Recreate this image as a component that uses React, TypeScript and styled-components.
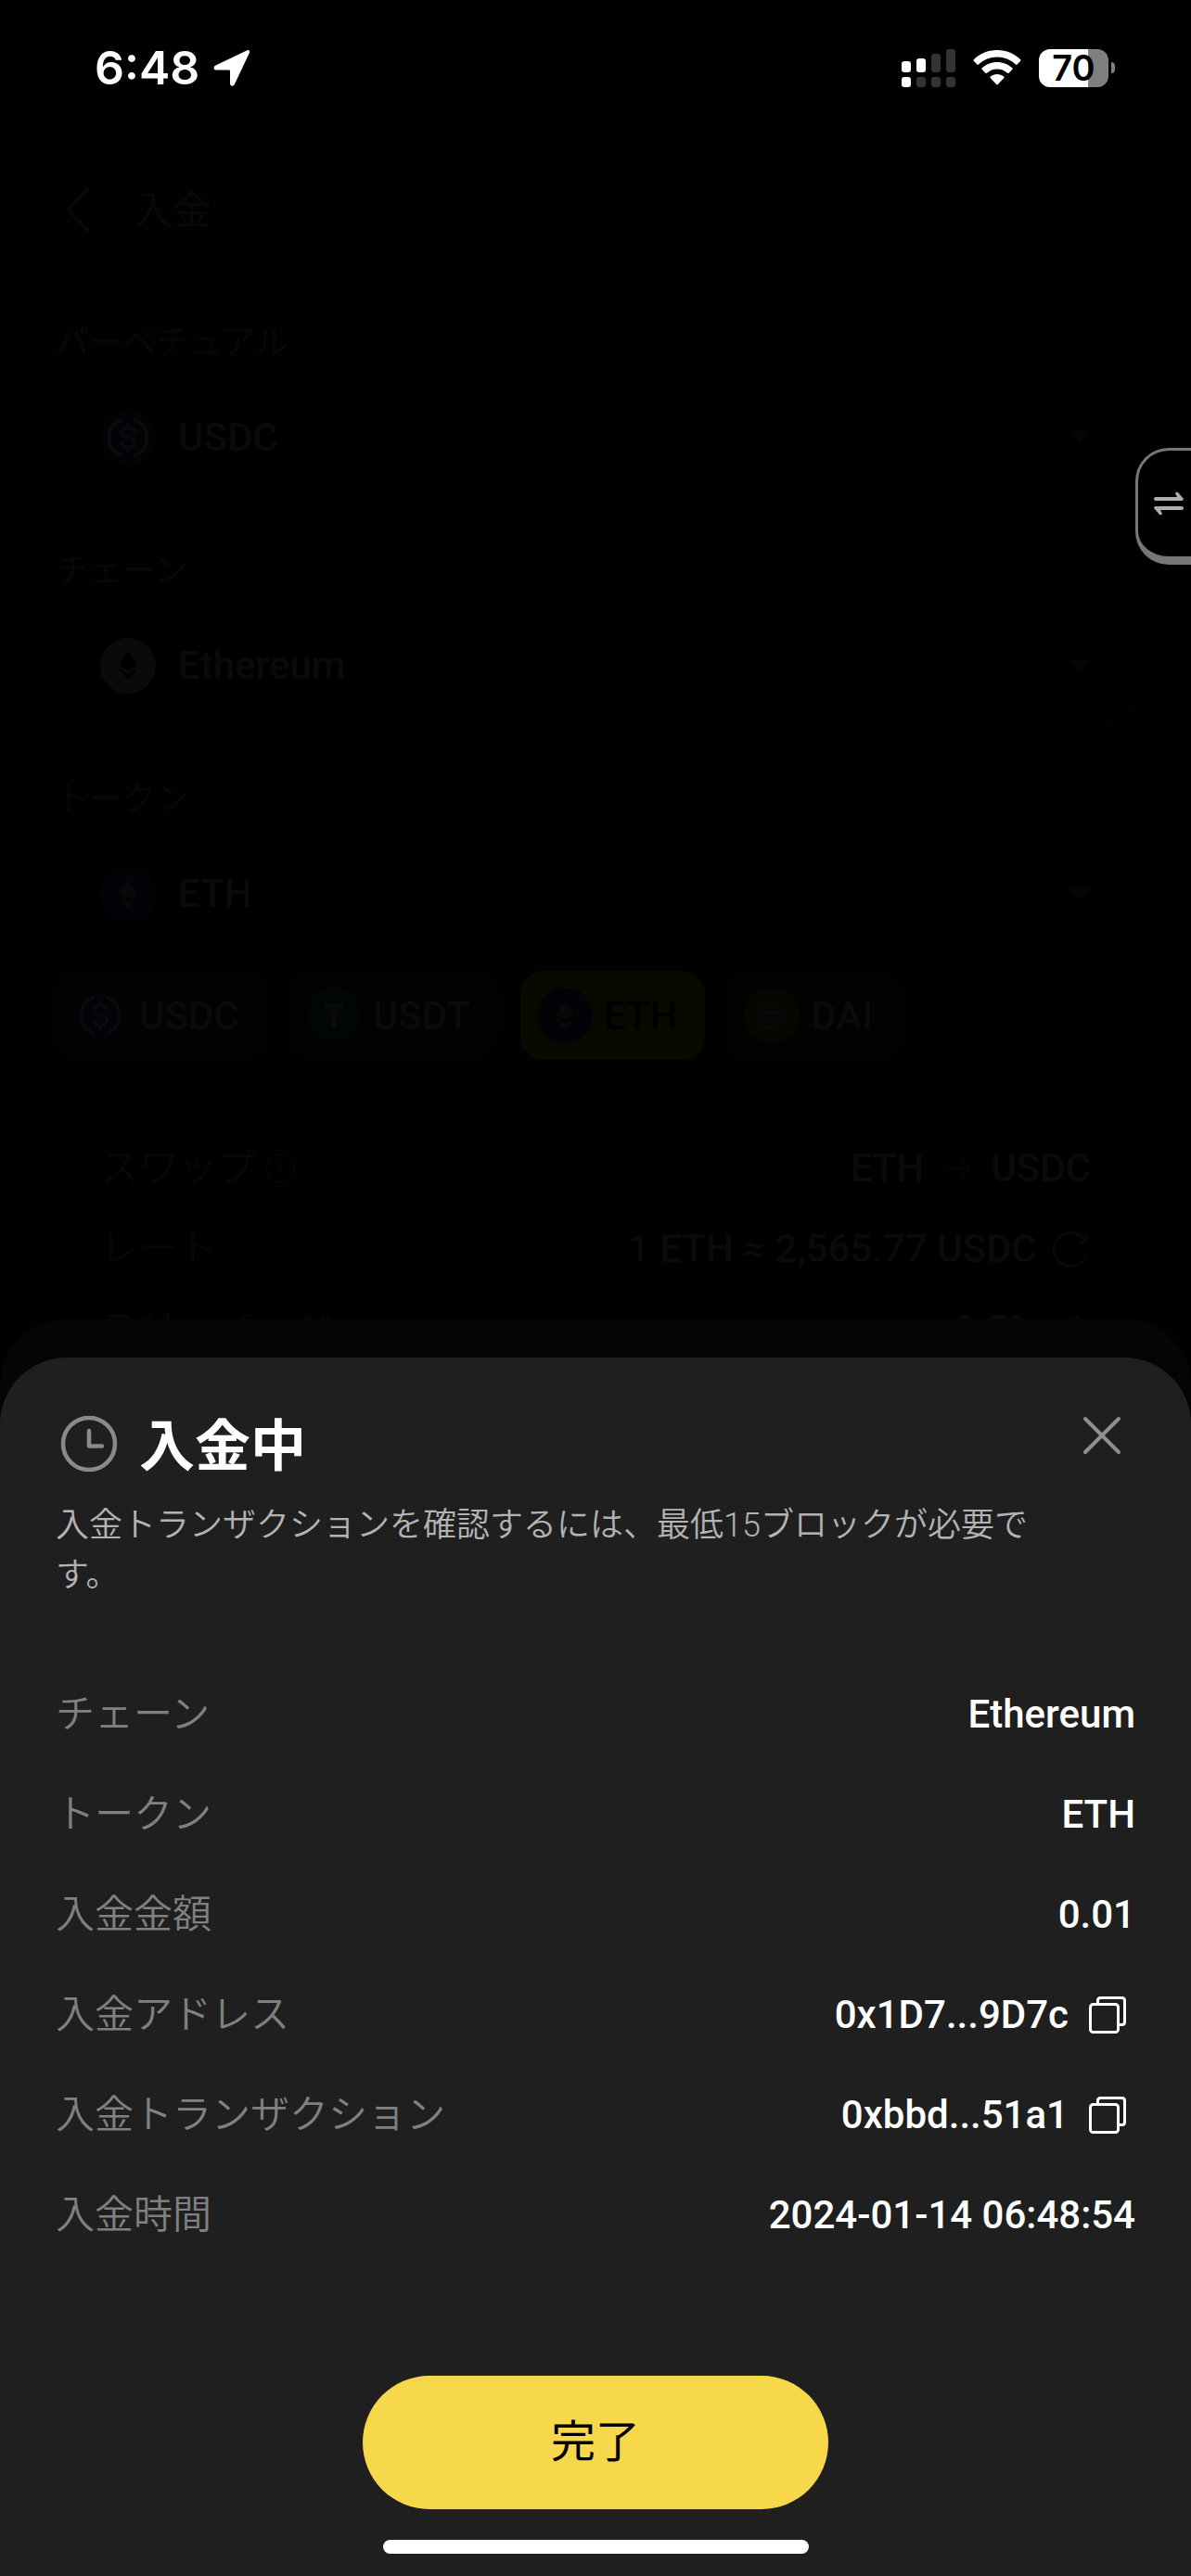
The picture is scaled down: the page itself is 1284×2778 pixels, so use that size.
import React, { useId } from "react";
import styled, { createGlobalStyle } from "styled-components";

const GlobalStyle = createGlobalStyle`
  *, *::before, *::after { box-sizing: border-box; }
  html, body { margin: 0; background: #010101; }
  body {
    font-family: Roboto, "Noto Sans CJK JP", sans-serif;
    font-size: 42px;
    color: #fff;
  }
  button, select { font: inherit; color: inherit; }
  button { border: 0; background: none; padding: 0; cursor: pointer; }
  svg { display: block; flex: none; }
  h1, h2, p, dl, dd, dt { margin: 0; padding: 0; font-weight: 400; }
`;

const Screen = styled.div`
  position: relative;
  display: flex;
  flex-direction: column;
  height: 100vh;
  overflow: hidden;
`;

const StatusBar = styled.header`
  display: flex;
  align-items: center;
  justify-content: space-between;
  height: 146px;
  padding: 0 82px 0 102px;
  flex: none;
`;

const StatusGroup = styled.div<{ $gap: number }>`
  display: flex;
  align-items: center;
  gap: ${(p) => p.$gap}px;
`;

const Clock = styled.time`
  font: 600 50px/60px Inter, sans-serif;
`;

const Battery = styled.div`
  display: flex;
  align-items: center;
  gap: 3px;
`;

const BatteryBody = styled.div`
  width: 75px;
  height: 41px;
  border-radius: 12px;
  background: linear-gradient(to right, #fff 53px, #808080 53px);
  color: #000;
  font: 600 38px/41px Inter, sans-serif;
  text-align: center;
`;

const BatteryTip = styled.div`
  width: 4px;
  height: 12px;
  border-radius: 0 4px 4px 0;
  background: #808080;
`;

const Main = styled.main`
  display: flex;
  flex-direction: column;
  padding: 0 60px;
  color: #0a0a0a;
`;

const NavBar = styled.nav`
  display: flex;
  align-items: center;
  height: 160px;
  gap: 36px;
`;

const BackButton = styled.button`
  width: 48px;
  height: 60px;
`;

const PageTitle = styled.h1`
  font-size: 42px;
  line-height: 60px;
  padding-top: 3px;
  color: #080808;
`;

const Field = styled.div`
  display: flex;
  flex-direction: column;
  gap: 15px;
  margin: 37px 0 20px;
`;

const FieldLabel = styled.label`
  color: #070707;
  font-size: 36px;
  line-height: 54px;
`;

const SelectBox = styled.div`
  display: flex;
  align-items: center;
  gap: 24px;
  height: 120px;
  padding: 0 48px;
  border-radius: 36px;
  background: #000;
`;

const Select = styled.select`
  flex: 1;
  appearance: none;
  border: 0;
  padding: 0;
  background: none;
  font-weight: 500;
  line-height: 60px;
`;

const Chips = styled.div`
  display: flex;
  gap: 24px;
  margin: 3px 0 36px;
`;

const Chip = styled.button<{ $active?: boolean }>`
  display: flex;
  align-items: center;
  gap: 12px;
  height: 96px;
  padding: 0 30px 0 18px;
  border-radius: 24px;
  background: ${(p) => (p.$active ? "#0a0900" : "#020202")};
  color: ${(p) => (p.$active ? "#000" : "#0a0a0a")};
  font-weight: 500;
`;

const Quote = styled.dl`
  display: flex;
  flex-direction: column;
  gap: 27px;
  padding: 51px 48px;
  border-radius: 36px;
  background: #000;
`;

const QuoteRow = styled.div`
  display: flex;
  align-items: center;
  justify-content: space-between;
  line-height: 60px;
`;

const QuoteName = styled.dt`
  display: flex;
  align-items: center;
  gap: 9px;
  color: #070707;
  font-weight: 350;
`;

const QuoteValue = styled.dd`
  display: flex;
  align-items: center;
  gap: 16px;
  font-weight: 500;
`;

const FloatingSwitch = styled.button`
  position: absolute;
  top: 483px;
  right: 0;
  display: flex;
  align-items: center;
  justify-content: flex-end;
  width: 60px;
  height: 126px;
  padding: 0 8px 0 0;
  border: solid #767676;
  border-width: 3px 0 9px 3px;
  border-radius: 36px 0 0 36px;
  background: #000;
`;

const SheetStack = styled.div`
  position: absolute;
  left: 0;
  right: 0;
  bottom: 0;
  padding-top: 42px;
  border-radius: 72px 72px 0 0;
  background: #050505;
`;

const Sheet = styled.section`
  display: flex;
  flex-direction: column;
  padding: 48px 60px 24px;
  border-radius: 72px 72px 0 0;
  background: #1f1f1f;
`;

const SheetHeader = styled.div`
  display: flex;
  align-items: flex-start;
  justify-content: space-between;
`;

const SheetIntro = styled.div`
  flex: 1;
  display: flex;
  flex-direction: column;
  gap: 8px;
`;

const SheetTitle = styled.h2`
  display: flex;
  align-items: flex-start;
  gap: 18px;
  font-size: 60px;
  font-weight: 700;
  line-height: 98px;
`;

const Note = styled.p`
  color: #b3b3b3;
  font-size: 36px;
  font-weight: 350;
  line-height: 54px;
`;

const CloseButton = styled.button`
  width: 72px;
  height: 72px;
`;

const Details = styled.dl`
  display: flex;
  flex-direction: column;
  padding: 69px 0 119px;
`;

const DetailRow = styled.div`
  display: flex;
  align-items: center;
  justify-content: space-between;
  height: 108px;
  line-height: 60px;
`;

const DetailName = styled.dt`
  color: #808080;
  font-weight: 350;
`;

const DetailValue = styled.dd`
  display: flex;
  align-items: center;
  gap: 12px;
  font-weight: 500;
`;

const DoneButton = styled.button`
  align-self: center;
  width: 502px;
  height: 144px;
  border-radius: 72px;
  background: #f7d84a;
  color: #000;
  font-size: 48px;
  line-height: 60px;
`;

const HomeIndicator = styled.div`
  align-self: center;
  width: 459px;
  height: 15px;
  margin-top: 33px;
  border-radius: 8px;
  background: #fff;
`;

type Coin = "USDC" | "USDT" | "ETH" | "DAI" | "Ethereum";

const coinColor: Record<Coin, string> = {
  USDC: "#010307",
  USDT: "#010504",
  ETH: "#020306",
  DAI: "#070500",
  Ethereum: "#0a0a0a",
};

function CoinIcon({ coin }: { coin: Coin }) {
  const ink =
    coin === "Ethereum" ? "#000" : coin === "ETH" || coin === "DAI" ? "#080808" : "#0a0a0a";
  return (
    <svg width="60" height="60" viewBox="0 0 60 60" fill="none" aria-hidden="true">
      <circle cx="30" cy="30" r="30" fill={coinColor[coin]} />
      {coin === "USDC" && (
        <g stroke={ink} strokeWidth="3.6">
          <path d="M24 10a21 21 0 0 0 0 40M36 10a21 21 0 0 1 0 40" />
          <path d="M37 25c0-4-3-6-7-6s-7 2-7 5.500 3 4.800 7 5.500 7 2 7 5.500-3 5.500-7 5.500-7-2-7-6M30 14v5M30 41v5" />
        </g>
      )}
      {coin === "USDT" && (
        <g stroke={ink}>
          <path d="M19 20h22M30 20v23" strokeWidth="5" />
          <ellipse cx="30" cy="28" rx="13" ry="3" strokeWidth="1.500" />
        </g>
      )}
      {(coin === "ETH" || coin === "Ethereum") && (
        <path d="M30 14l10 16-10 5-10-5zM20 33l10 5 10-5-10 13z" fill={ink} />
      )}
      {coin === "DAI" && (
        <path d="M19 16.500h9c8.500 0 14 5.500 14 13.500s-5.500 13.500-14 13.500h-9zM13 26.500h34M13 33.500h34" stroke={ink} strokeWidth="3" />
      )}
    </svg>
  );
}

const CaretDown = () => (
  <svg width="24" height="16" viewBox="0 0 24 16" aria-hidden="true">
    <path d="M3 1h18q2 0 1 2l-9 11q-1 1-2 0L2 3Q1 1 3 1z" fill="#050505" />
  </svg>
);

const LocationArrow = () => (
  <svg width="40" height="40" viewBox="0 0 40 40" fill="#fff" aria-hidden="true">
    <path d="M36.500 1.200 2.500 17.500c-3 1.500-2.200 5 .8 5H17q1 0 1 1v13.500c0 3 3.500 3.800 4.800 1L39 3.800c.8-2-.8-3.400-2.500-2.600z" />
  </svg>
);

const Signal = () => (
  <svg width="58" height="41" viewBox="0 0 58 41" aria-hidden="true">
    <g fill="#fff">
      <rect x="0" y="13" width="10" height="12" rx="3" />
      <rect x="16" y="10" width="10" height="15" rx="3" />
      <rect x="0" y="30" width="10" height="11" rx="3" />
    </g>
    <g fill="#333">
      <rect x="32" y="5" width="10" height="20" rx="3" />
      <rect x="48" y="0" width="10" height="25" rx="3" />
      <rect x="16" y="30" width="10" height="11" rx="3" />
      <rect x="32" y="30" width="10" height="11" rx="3" />
      <rect x="48" y="30" width="10" height="11" rx="3" />
    </g>
  </svg>
);

const Wifi = () => (
  <svg width="52" height="38" viewBox="0 0 52 38" fill="#fff" aria-hidden="true">
    <path d="M26 0C16 0 7 4 .8 10.200q-.8.800 0 1.600l3.600 3.700q.8.800 1.600 0C11.400 10.500 18.500 7.600 26 7.600s14.600 2.900 20 7.900q.8.800 1.600 0l3.600-3.700q.8-.800 0-1.600C45 4 36 0 26 0z" />
    <path d="M26 13c-6.200 0-12 2.400-16.300 6.300q-.9.800 0 1.700l3.700 3.700q.8.700 1.600 0C18 22 21.800 20.500 26 20.500s8 1.500 11 4.200q.8.700 1.600 0l3.700-3.700q.9-.9 0-1.700C38 15.400 32.200 13 26 13z" />
    <path d="M26 26c-2.700 0-5.200 1-7.200 2.600q-.9.700 0 1.600l6.400 6.800q.8.800 1.600 0l6.400-6.800q.9-.9 0-1.600C31.200 27 28.700 26 26 26z" />
  </svg>
);

const CopyIcon = () => (
  <svg width="60" height="60" viewBox="0 0 60 60" fill="none" stroke="#fff" strokeWidth="3" aria-hidden="true">
    <rect x="11.500" y="18.500" width="30" height="30" rx="3" />
    <path d="M19.500 18.500v-4q0-3 3-3h23q3 0 3 3v23q0 3-3 3h-4" />
  </svg>
);

function TokenField({ label, coin }: { label: string; coin: Coin }) {
  const id = useId();
  return (
    <Field>
      <FieldLabel htmlFor={id}>{label}</FieldLabel>
      <SelectBox>
        <CoinIcon coin={coin} />
        <Select id={id} defaultValue={coin}>
          <option>{coin}</option>
        </Select>
        <CaretDown />
      </SelectBox>
    </Field>
  );
}

const fields: { label: string; coin: Coin }[] = [
  { label: "パーペチュアル", coin: "USDC" },
  { label: "チェーン", coin: "Ethereum" },
  { label: "トークン", coin: "ETH" },
];

const chips: Coin[] = ["USDC", "USDT", "ETH", "DAI"];

const details: { name: string; value: string; copy?: boolean }[] = [
  { name: "チェーン", value: "Ethereum" },
  { name: "トークン", value: "ETH" },
  { name: "入金金額", value: "0.01" },
  { name: "入金アドレス", value: "0x1D7...9D7c", copy: true },
  { name: "入金トランザクション", value: "0xbbd...51a1", copy: true },
  { name: "入金時間", value: "2024-01-14 06:48:54" },
];

export default function App() {
  return (
    <Screen>
      <GlobalStyle />
      <StatusBar>
        <StatusGroup $gap={15}>
          <Clock>6:48</Clock>
          <LocationArrow />
        </StatusGroup>
        <StatusGroup $gap={19}>
          <Signal />
          <Wifi />
          <Battery>
            <BatteryBody>70</BatteryBody>
            <BatteryTip />
          </Battery>
        </StatusGroup>
      </StatusBar>

      <Main>
        <NavBar>
          <BackButton aria-label="戻る">
            <svg width="48" height="60" viewBox="0 0 48 60" fill="none" stroke="#080808" strokeWidth="3">
              <path d="M36 6 13 30l23 24" />
            </svg>
          </BackButton>
          <PageTitle>入金</PageTitle>
        </NavBar>

        {fields.map((f) => (
          <TokenField key={f.label} {...f} />
        ))}

        <Chips>
          {chips.map((coin) => (
            <Chip key={coin} $active={coin === "ETH"}>
              <CoinIcon coin={coin} />
              {coin}
            </Chip>
          ))}
        </Chips>

        <Quote>
          <QuoteRow>
            <QuoteName>
              スワップ
              <svg width="34" height="34" viewBox="0 0 34 34" fill="none" stroke="#060606" strokeWidth="2">
                <circle cx="17" cy="17" r="15" />
                <path d="M17 8v12M17 23v3" />
              </svg>
            </QuoteName>
            <QuoteValue>
              ETH
              <svg width="40" height="40" viewBox="0 0 40 40" fill="none" stroke="#050505" strokeWidth="3">
                <path d="M7 20h26M24 11l9 9-9 9" />
              </svg>
              USDC
            </QuoteValue>
          </QuoteRow>
          <QuoteRow>
            <QuoteName>レート</QuoteName>
            <QuoteValue>
              1 ETH ≈ 2,565.77 USDC
              <svg width="42" height="42" viewBox="0 0 42 42" fill="none" stroke="#0a0900" strokeWidth="3">
                <path d="M37 28A18 18 0 1 1 36 13M37 5v9h-8" />
              </svg>
            </QuoteValue>
          </QuoteRow>
          <QuoteRow>
            <QuoteName>スリッページ</QuoteName>
            <QuoteValue>
              0.5%
              <svg width="42" height="42" viewBox="0 0 42 42" fill="none" stroke="#0a0900" strokeWidth="3">
                <path d="M7 35l2-9L28 7l7 7-19 19z" />
              </svg>
            </QuoteValue>
          </QuoteRow>
        </Quote>
      </Main>

      <FloatingSwitch aria-label="切り替え">
        <svg width="32" height="26" viewBox="0 0 32 26" fill="#adadad">
          <path d="M2 6h23l-2-4q1-2 3-1l6 7q0 2-2 2H2q-2 0-2-2t2-2z" />
          <path d="M30 20H7l2 4q-1 2-3 1l-6-7q0-2 2-2h28q2 0 2 2t-2 2z" />
        </svg>
      </FloatingSwitch>

      <SheetStack>
        <Sheet role="dialog" aria-labelledby="sheet-title">
          <SheetHeader>
            <SheetIntro>
              <SheetTitle id="sheet-title">
                <svg width="72" height="90" viewBox="0 -9 72 90" fill="none" stroke="#8a8a8a" strokeWidth="4.500" aria-hidden="true">
                  <circle cx="36" cy="36" r="28" />
                  <path d="M36 22v16.500h14" strokeLinecap="round" strokeLinejoin="round" />
                </svg>
                入金中
              </SheetTitle>
              <Note>入金トランザクションを確認するには、最低15ブロックが必要です。</Note>
            </SheetIntro>
            <CloseButton aria-label="閉じる">
              <svg width="72" height="72" viewBox="0 0 72 72" fill="none" stroke="#8f8f8f" strokeWidth="4" strokeLinecap="round">
                <path d="M18 18l36 36M54 18 18 54" />
              </svg>
            </CloseButton>
          </SheetHeader>

          <Details>
            {details.map((d) => (
              <DetailRow key={d.name}>
                <DetailName>{d.name}</DetailName>
                <DetailValue>
                  {d.value}
                  {d.copy && (
                    <button aria-label="コピー">
                      <CopyIcon />
                    </button>
                  )}
                </DetailValue>
              </DetailRow>
            ))}
          </Details>

          <DoneButton>完了</DoneButton>
          <HomeIndicator />
        </Sheet>
      </SheetStack>
    </Screen>
  );
}
